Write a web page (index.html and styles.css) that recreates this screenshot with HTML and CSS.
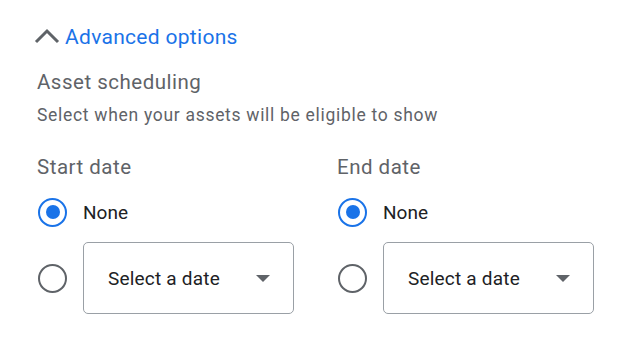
FILE: index.html
```html
<!DOCTYPE html>
<html>
<head>
<meta charset="utf-8">
<link rel="stylesheet" href="styles.css">
</head>
<body>
<div class="panel">
  <div class="toggle">
    <svg class="chev" width="28" height="20" viewBox="0 0 28 20"><polyline points="3,15 14,4 25,15" fill="none" stroke="#5f6368" stroke-width="3"/></svg>
    <span class="toggle-label">Advanced options</span>
  </div>
  <div class="section-title">Asset scheduling</div>
  <div class="section-desc">Select when your assets will be eligible to show</div>
  <div class="cols">
    <div class="col">
      <div class="col-title">Start date</div>
      <div class="row first">
        <span class="radio checked"></span>
        <span class="opt">None</span>
      </div>
      <div class="row second">
        <span class="radio"></span>
        <div class="select"><span class="select-text">Select a date</span><span class="caret"></span></div>
      </div>
    </div>
    <div class="col">
      <div class="col-title">End date</div>
      <div class="row first">
        <span class="radio checked"></span>
        <span class="opt">None</span>
      </div>
      <div class="row second">
        <span class="radio"></span>
        <div class="select"><span class="select-text">Select a date</span><span class="caret"></span></div>
      </div>
    </div>
  </div>
</div>
</body>
</html>
```
FILE: styles.css
```css
html, body {
  margin: 0;
  padding: 0;
  background: #ffffff;
}
body {
  font-family: Roboto, "Liberation Sans", Arial, sans-serif;
  color: #202124;
}
.panel {
  padding: 24px 0 0 37px;
}
.toggle {
  display: flex;
  align-items: center;
  height: 26px;
  margin-left: -4px;
}
.chev {
  display: block;
  margin-right: 4px;
}
.toggle-label {
  font-size: 21px;
  color: #1a73e8;
  letter-spacing: 0.3px;
}
.section-title {
  margin-top: 19px;
  font-size: 20.5px;
  line-height: 26px;
  color: #5f6368;
  letter-spacing: 0.5px;
}
.section-desc {
  margin-top: 9px;
  font-size: 17.5px;
  line-height: 22px;
  color: #5f6368;
  letter-spacing: 0.7px;
}
.cols {
  display: flex;
  margin-top: 28px;
}
.col {
  flex: 0 0 300px;
  width: 300px;
}
.col-title {
  font-size: 20.5px;
  line-height: 26px;
  color: #5f6368;
  letter-spacing: 0.5px;
}
.row {
  display: flex;
  align-items: center;
}
.row.first {
  margin-top: 16px;
  height: 32px;
}
.row.second {
  margin-top: 14px;
}
.radio {
  box-sizing: border-box;
  flex: 0 0 29px;
  width: 29px;
  height: 29px;
  border: 2.5px solid #5f6368;
  border-radius: 50%;
  margin-left: 1px;
  display: flex;
  align-items: center;
  justify-content: center;
}
.radio.checked {
  border-color: #1a73e8;
}
.radio.checked::after {
  content: "";
  width: 14px;
  height: 14px;
  border-radius: 50%;
  background: #1a73e8;
}
.opt {
  margin-left: 16px;
  font-size: 19px;
  color: #202124;
}
.select {
  box-sizing: border-box;
  margin-left: 16px;
  width: 211px;
  height: 72px;
  border: 1px solid #9aa0a6;
  border-radius: 5px;
  display: flex;
  align-items: center;
  padding: 0 23px 0 24px;
}
.select-text {
  flex: 1;
  font-size: 19px;
  color: #202124;
  letter-spacing: 0.2px;
}
.caret {
  width: 0;
  height: 0;
  border-left: 7px solid transparent;
  border-right: 7px solid transparent;
  border-top: 7px solid #5f6368;
}
```
